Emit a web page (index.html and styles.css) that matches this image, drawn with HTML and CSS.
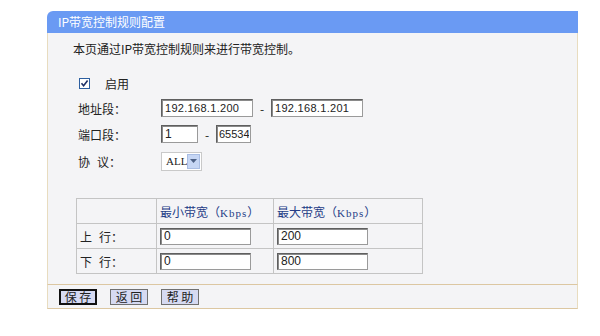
FILE: index.html
```html
<!DOCTYPE html>
<html lang="zh-CN">
<head>
    <meta charset="UTF-8">
    <title>IP带宽控制规则配置</title>
    <link rel="stylesheet" href="styles.css">
</head>
<body>

<div class="panel">
    <div class="panel-head">IP带宽控制规则配置</div>

    <div class="panel-body">
        <p class="desc">本页通过IP带宽控制规则来进行带宽控制。</p>

        <div class="check-row">
            <span class="checkbox">
                <svg width="11" height="11" viewBox="0 0 11 11">
                    <rect x="0.5" y="0.5" width="10" height="10" fill="#fff" stroke="#2d5fa0"/>
                    <path d="M2.5 5.3 L4.6 7.8 L8.6 2.6" fill="none" stroke="#1d2f66" stroke-width="1.6"/>
                </svg>
            </span>
            <span>启用</span>
        </div>

        <div class="form-row">
            <label class="lbl">地址段：</label>
            <input type="text" class="txt ip" value="192.168.1.200">
            <span class="dash">-</span>
            <input type="text" class="txt ip" value="192.168.1.201">
        </div>

        <div class="form-row">
            <label class="lbl">端口段：</label>
            <input type="text" class="txt port-a" value="1">
            <span class="dash">-</span>
            <input type="text" class="txt port-b" value="65534">
        </div>

        <div class="form-row proto">
            <label class="lbl"><span class="sp">协</span>议：</label>
            <div class="select">
                <span class="select-val">ALL</span>
                <span class="select-btn">
                    <svg width="7" height="4" viewBox="0 0 7 4"><path d="M0 0 H7 L3.5 4 Z" fill="#4d6185"/></svg>
                </span>
            </div>
        </div>

        <table class="bw">
            <tr>
                <td class="c1"></td>
                <td class="c2 th">最小带宽（<span class="unit">Kbps</span>）</td>
                <td class="c3 th">最大带宽（<span class="unit">Kbps</span>）</td>
            </tr>
            <tr>
                <td class="c1"><span class="sp">上</span>行：</td>
                <td class="c2"><input type="text" class="txt cell" value="0"></td>
                <td class="c3"><input type="text" class="txt cell" value="200"></td>
            </tr>
            <tr>
                <td class="c1"><span class="sp">下</span>行：</td>
                <td class="c2"><input type="text" class="txt cell" value="0"></td>
                <td class="c3"><input type="text" class="txt cell" value="800"></td>
            </tr>
        </table>
    </div>

    <div class="panel-foot">
        <button class="btn active">保&nbsp;存</button>
        <button class="btn">返&nbsp;回</button>
        <button class="btn">帮&nbsp;助</button>
    </div>
</div>

</body>
</html>
```

FILE: styles.css
```css
body {
    margin: 0;
    background: #fff;
    font-family: "Noto Sans CJK SC", "Liberation Sans", sans-serif;
    font-size: 12px;
    color: #222;
}
.panel {
    width: 531px;
    margin: 11px 0 0 47px;
}
.panel-head {
    height: 22px;
    line-height: 22px;
    padding-left: 11px;
    background: #6a9af3;
    color: #fff;
    border-radius: 6px 0 0 0;
    font-size: 12px;
}
.panel-body {
    background: #f4f4f6;
    border-left: 1px solid #e8dcbf;
    border-right: 1px solid #e8dcbf;
    border-bottom: 1px solid #dcc7a2;
    padding: 7px 0 10px 0;
}
.desc {
    margin: 0 0 16px 25px;
    line-height: 17px;
}
.check-row {
    display: flex;
    align-items: center;
    height: 20px;
    margin-left: 31px;
    gap: 15px;
}
.checkbox {
    display: flex;
}
.form-row {
    display: flex;
    align-items: center;
    height: 20px;
    margin: 5px 0 0 30px;
}
.form-row + .form-row {
    margin-top: 6px;
}
.form-row.proto {
    height: 22px;
}
.lbl {
    width: 83px;
}
.sp {
    margin-right: 7px;
}
.txt {
    box-sizing: border-box;
    height: 18px;
    padding: 0 3px;
    border: 1px solid #5f5f5f;
    border-right-color: #9a9a9a;
    border-bottom-color: #9a9a9a;
    box-shadow: inset 1px 1px 0 #8a8a8a;
    background: #fff;
    font-family: "Liberation Sans", sans-serif;
    font-size: 12px;
    color: #222;
}
.ip {
    width: 92px;
    font-size: 11px;
    letter-spacing: 0.3px;
}
.port-a {
    width: 37px;
}
.port-b {
    width: 35px;
    padding: 0 1px 0 2px;
    font-size: 11px;
}
.dash {
    width: 18px;
    text-align: center;
}
.select {
    display: flex;
    align-items: center;
    width: 41px;
    height: 19px;
    box-sizing: border-box;
    border: 1px solid #c9c9c9;
    background: #fff;
    padding-left: 4px;
    font-family: "Liberation Serif", serif;
    font-size: 11px;
}
.select-val {
    flex: 1;
}
.select-btn {
    display: flex;
    align-items: center;
    justify-content: center;
    width: 13px;
    height: 15px;
    margin-right: 1px;
    background: #c6d6f4;
    border: 1px solid #a9bde3;
    box-sizing: border-box;
}
.bw {
    border-collapse: collapse;
    margin: 26px 0 0 28px;
    width: 347px;
}
.bw td {
    border: 1px solid #c4c4c4;
    height: 25px;
    padding: 0 0 0 3px;
    box-sizing: border-box;
}
.bw .c1 {
    width: 80px;
}
.bw .c2 {
    width: 117px;
}
.th {
    color: #253c86;
}
.unit {
    font-family: "Liberation Serif", serif;
    font-size: 11px;
    letter-spacing: 1px;
}
.cell {
    width: 91px;
    height: 17px;
    display: block;
}
.panel-foot {
    display: flex;
    gap: 13px;
    align-items: center;
    height: 23px;
    padding-left: 11px;
    background: #f4f4f6;
    border-left: 1px solid #e8dcbf;
    border-right: 1px solid #e8dcbf;
    border-bottom: 1px solid #dcc7a2;
}
.btn {
    width: 38px;
    height: 16px;
    padding: 0;
    box-sizing: border-box;
    border: 1px solid #707070;
    background: #d6daf2;
    font-family: "Noto Sans CJK SC", sans-serif;
    font-size: 12px;
    line-height: 14px;
    color: #222;
}
.btn.active {
    border: 2px solid #111;
    line-height: 12px;
}
```
